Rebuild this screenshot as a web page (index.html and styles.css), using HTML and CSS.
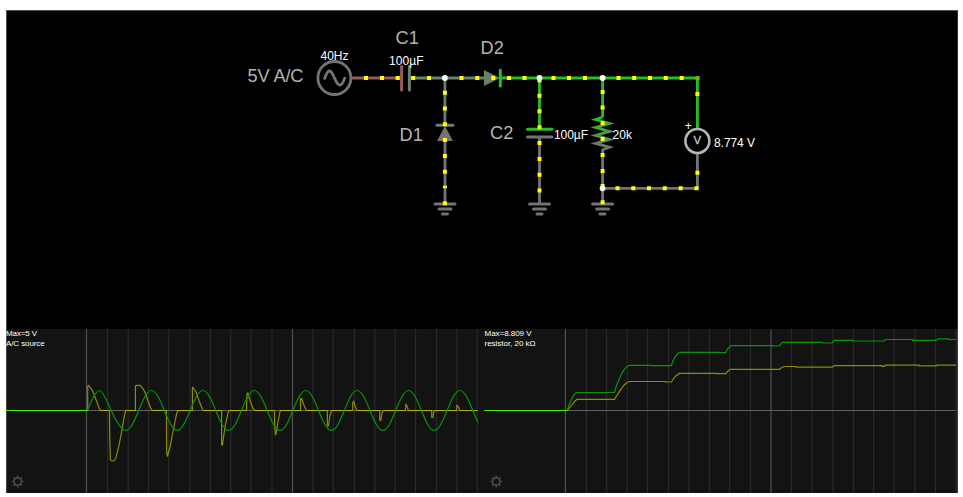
FILE: index.html
```html
<!DOCTYPE html>
<html lang="en">
<head>
    <meta charset="UTF-8">
    <meta name="viewport" content="width=device-width, initial-scale=1.0">
    <title>Circuit Simulator</title>
    <link rel="stylesheet" href="styles.css">
</head>
<body>
    <div class="simulator">
        <!-- Circuit -->
        <svg class="circuit" viewBox="6 10 952 319">
            <defs>
                <linearGradient id="drop" gradientUnits="userSpaceOnUse" x1="0" y1="117" x2="0" y2="150">
                    <stop offset="0" stop-color="#28bc28"/>
                    <stop offset="1" stop-color="#737373"/>
                </linearGradient>
            </defs>

            <!-- A/C source -->
            <circle class="neutral" cx="334.4" cy="78" r="16.5"/>
            <path class="neutral" d="M324.2 79.5C326 75 327 71 329.3 71C332 71 332.8 75 334.5 78C336 81 337 85 340 85C342.5 85 343.5 81 345.2 77"/>

            <!-- Wires -->
            <path class="neg" d="M351.5 78H401"/>
            <path class="low" d="M410 78H485M444.9 78V125"/>
            <path class="high" d="M500 78H697.4V129M539.5 78V129M602.6 78V117"/>
            <path class="neutral" d="M445 140V204M539.5 137V204M602.6 149V204M602.6 188.3H697.4V153"/>

            <!-- C1, D2, D1, C2 -->
            <path class="neg plate" d="M401.6 66.5V90"/>
            <path class="low plate" d="M409.4 66.5V90"/>
            <path class="low-fill" d="M484 70V86L500 78Z"/>
            <path class="high plate" d="M500.3 70V86"/>
            <path class="low plate" d="M437 125.3H453"/>
            <path class="neutral-fill" d="M445 126L437 141H453Z"/>
            <path class="high plate" d="M527.5 129.3H552"/>
            <path class="neutral plate" d="M527.5 137H552"/>

            <!-- Resistor and voltmeter -->
            <path class="resistor" d="M602.6 117L595.5 119.5L609.5 123.4L595.5 127.4L609.5 131.4L595.5 135.4L609.5 139.4L595.5 143.4L609.5 147.2L602.6 149.7"/>
            <circle class="meter" cx="697.4" cy="141" r="12"/>

            <!-- Grounds -->
            <path class="neutral ground" d="M435 204H455M439 209H451M442.5 214H447.5"/>
            <path class="neutral ground" d="M529.5 204H549.5M533.5 209H545.5M537 214H542"/>
            <path class="neutral ground" d="M592.6 204H612.6M596.6 209H608.6M600 214H605"/>

            <!-- Current dots -->
            <path class="dots" d="M364 78h4m12 0h4m11.7 0h4m11.5 0h4m11.8 0h4m28.5 0h4m11.8 0h4m12 0h4m11.7 0h4m11.5 0h4m25 0h4m11.5 0h4m12 0h4m29.5 0h4m11.7 0h4m11.8 0h4m11.8 0h4m11.9 0h4"/>
            <path class="dots" d="M442.9 92.7h4m-4 15.8h4m-4 15.7h4m-4 15.8h4m-4 16h4m-4 15.7h4m-4 31.6h4"/>
            <path class="dots half" d="M442.9 187h4"/>
            <path class="dots" d="M537.5 80.5h4m-4 15.2h4m-4 15.6h4m-4 15.9h4m-4 15.8h4m-4 16h4m-4 15.7h4m-4 15.8h4"/>
            <path class="dots" d="M600.6 92h4m-4 15.5h4m-4 15.8h4m-4 15.7h4m-4 16h4m-4 16h4m-4 15h4m-4 16.3h4"/>
            <path class="dots" d="M695.4 94h4m-4 78.7h4M615.5 188.3h4m11.8 0h4m11.7 0h4m11.8 0h4m11.9 0h4m11.8 0h4"/>
            <rect class="corner-dot" x="695.6" y="76" width="4" height="4"/>

            <!-- Junctions -->
            <g class="junctions">
                <circle cx="444.9" cy="78" r="2.9"/>
                <circle cx="539.5" cy="78" r="2.9"/>
                <circle cx="602.6" cy="78" r="2.9"/>
                <circle cx="602.6" cy="188.3" r="2.9"/>
            </g>

            <!-- Labels -->
            <g class="labels">
                <text x="247.5" y="81.5" textLength="56">5V A/C</text>
                <text x="395.5" y="44">C1</text>
                <text x="480.5" y="54">D2</text>
                <text x="399.5" y="140.5">D1</text>
                <text x="490" y="138.7">C2</text>
            </g>
            <g class="values">
                <text x="320.5" y="59.5" textLength="28">40Hz</text>
                <text x="389" y="64.5" textLength="34.5">100µF</text>
                <text x="554" y="139.3" textLength="34">100µF</text>
                <text x="612.5" y="139.3" textLength="19.5">20k</text>
                <text x="714" y="147" textLength="41">8.774 V</text>
                <text x="684.8" y="130">+</text>
                <text class="meter-text" x="697.4" y="144.3">V</text>
            </g>
        </svg>

        <!-- Scopes -->
        <div class="scopes">
            <svg class="scope" viewBox="6 329 472 164">
                <path class="grid" d="M107.5 329v164M128.2 329v164M148.5 329v164M168.7 329v164M189.8 329v164M210.4 329v164M230.7 329v164M250.9 329v164M272 329v164M313 329v164M333.3 329v164M354.4 329v164M374.8 329v164M395.2 329v164M415.6 329v164M436.5 329v164M456.8 329v164M477.3 329v164"/>
                <path class="grid major" d="M86.5 329v164M292.5 329v164"/>
                <path class="axis" d="M6 410.5H477.5"/>
                <path class="current" d="M87.7 410.5V386L88.7 385.3L89.7 387L91.7 389.3L94.3 395L97 402.3L99.3 408.7L100.7 410.5H109.5L109.7 438L110 446.7L110.4 460L112 461H114L115.7 458.3L118.7 446.7L121.7 431.7L124 417.7L125.7 410.5H135.4V386L136.3 385.3H140L143 388.5L145.5 393.5L148 401L150.5 407.5L152 410.5H166.4L166.7 453L167.5 456.5L168.3 453L170 447L173.3 430L176.7 413.3L177.7 410.5H192.4V388L193 387.5L196 392L199 400.5L201.5 407L203.3 410.5H221.6V444.5L222.4 445L225 427L228 413L229 410.5H246.5L247 394L247.8 393L250.5 402L253 408.5L254.7 410.5H274.5L274.7 428L275.5 434.5L276 434L278 421.5L280.3 410.5H300.5V398.5H301.7L303.7 404.5L306.3 410.5H327.4V426H328.5L330 415.5L331.7 410.5H352.7V403L353.7 401.5L355.3 407L357 410.5H379.7V420L380.7 420.5L382 413L383.3 410.5H405.3L406 404.5L407 406L408.3 410.5H431.7V417.5H433L433.7 412L435 410.5H456.7V405.5L458 406L460 410.5H477.3"/>
                <path class="rest" d="M100.7 410.5H109.5M125.7 410.5H135.4M152 410.5H166.4M177.7 410.5H192.4M203.3 410.5H221.6M229 410.5H246.5M254.7 410.5H274.5M280.3 410.5H300.5M306.3 410.5H327.4M331.7 410.5H352.7M357 410.5H379.7M383.3 410.5H405.3M408.3 410.5H431.7M435 410.5H456.7M460 410.5H477.3"/>
                <path class="voltage" d="M87.3 410.5c4.08 -10 8.17 -20 12.85 -20s16.34 40 25.7 40s16.34 -40 25.7 -40s16.34 40 25.7 40s16.34 -40 25.7 -40s16.34 40 25.7 40s16.34 -40 25.7 -40s16.34 40 25.7 40s16.34 -40 25.7 -40s16.34 40 25.7 40s16.34 -40 25.7 -40s16.34 40 25.7 40s16.34 -40 25.7 -40s16.34 40 25.7 40s16.34 -40 25.7 -40s16.34 40 25.7 40"/>
                <path class="idle" d="M6 410.5H87.7"/>
                <g class="info">
                    <text x="6" y="335.6" textLength="31">Max=5 V</text>
                    <text x="6" y="345.6" textLength="38.7">A/C source</text>
                </g>
                <g class="gear">
                    <circle cx="17.7" cy="481.5" r="3.6"/>
                    <path d="M17.7 475.5v2.4M17.7 485.1v2.4M11.7 481.5h2.4M21.3 481.5h2.4M13.5 477.3l1.7 1.7M20.2 484l1.7 1.7M13.5 485.7l1.7 -1.7M20.2 479l1.7 -1.7"/>
                </g>
            </svg>

            <svg class="scope" viewBox="484 329 473 164">
                <path class="grid" d="M586.4 329v164M606.6 329v164M627.2 329v164M647.5 329v164M668.5 329v164M688.8 329v164M709.4 329v164M729.6 329v164M750.5 329v164M791.4 329v164M812 329v164M833 329v164M853.4 329v164M873.6 329v164M894 329v164M915 329v164M935.5 329v164M956 329v164"/>
                <path class="grid major" d="M565.4 329v164M771 329v164"/>
                <path class="axis" d="M484 410.5H956"/>
                <path class="current" d="M567.3 410.5L571.7 405L575 401L577 399.4H614.5L618.3 393.3L623.3 386L626.7 382.7L629.3 381.5H665.5V382H671.5L673.3 379L675.7 376L679.3 373.4H716.5V373.7H725.8L728 371L730.5 369.3H779.5L781 368L784 366.5H796V367.2H832.3L834 365.7H882V366.3H884L885.5 365.2H919V365.9H936L937 365.2H956"/>
                <path class="voltage" d="M567 410.5L568.3 407.3L570.7 400.7L573.3 395.7L575.7 393L577.7 392.5H614.5L616.7 385L621.7 373.3L625 368.3L627.7 366L630 365.3H650L651 365.7H671.3L673.3 360L676.7 354.7L679.3 352.3H719V352.6H725.8L727.3 349.3L731 345.6H773V346H779L782.5 342.4H822V343H832L834 340.4H852.7V341H884L885.3 339.5H912.7V340.3H936.7L938 338.8H948.7V339.5H956"/>
                <path class="idle" d="M484.5 410.5H567.3"/>
                <g class="info">
                    <text x="484.5" y="335.6" textLength="47">Max=8.809 V</text>
                    <text x="484.5" y="345.6" textLength="51">resistor, 20 kΩ</text>
                </g>
                <g class="gear">
                    <circle cx="496.2" cy="481.5" r="3.6"/>
                    <path d="M496.2 475.5v2.4M496.2 485.1v2.4M490.2 481.5h2.4M499.8 481.5h2.4M492 477.3l1.7 1.7M498.7 484l1.7 1.7M492 485.7l1.7 -1.7M498.7 479l1.7 -1.7"/>
                </g>
            </svg>
        </div>
    </div>
</body>
</html>
```
FILE: styles.css
```css
body {
    margin: 0;
    padding: 10px 5px 4px 6px;
    background-color: #fff;
    font-family: "Liberation Sans", Arial, sans-serif;
}

.simulator {
    display: flex;
    flex-direction: column;
    width: 952px;
}

svg {
    display: block;
    fill: none;
}

.circuit {
    width: 952px;
    height: 319px;
    background-color: #000;
    box-shadow: inset 1px 1px #505454, inset -1px 0 #303030;
}

/* Wire colors by voltage */
.neutral, .neg, .low, .high {
    stroke: #737373;
    stroke-width: 2.8;
}

.neg {
    stroke: #965a5a;
}

.low {
    stroke: #6b806b;
}

.high {
    stroke: #28bc28;
}

.plate, .ground {
    stroke-width: 3;
    stroke-linecap: round;
}

.low-fill {
    fill: #6b806b;
}

.neutral-fill {
    fill: #737373;
}

.resistor {
    stroke: url(#drop);
    stroke-width: 2.8;
}

.meter {
    stroke: #b4b4b4;
    stroke-width: 2.6;
}

.dots {
    stroke: #ffff00;
    stroke-width: 4;
}

.half {
    stroke-width: 2.5;
}

.corner-dot {
    fill: #7cb000;
}

.junctions {
    fill: #fff;
}

.labels {
    fill: #b4b4b4;
    font-size: 18.2px;
}

.values {
    fill: #fff;
    font-size: 12px;
}

.meter-text {
    fill: #c8c8c8;
    stroke: #c8c8c8;
    stroke-width: 0.3;
    font-size: 11.5px;
    text-anchor: middle;
}

/* Scope traces */
.scopes {
    display: flex;
    gap: 6px;
    width: 951px;
    height: 164px;
    background-color: #131313;
    border-right: 1px solid #404040;
    box-shadow: inset 1px 0 #444;
}

.scope {
    flex: 0 0 472px;
    height: 164px;
}

.scope + .scope {
    flex-basis: 473px;
}

.grid {
    stroke: #292929;
    stroke-width: 1.2;
}

.major {
    stroke: #505050;
}

.axis {
    stroke: #606060;
}

.current {
    stroke: #8c8c05;
    stroke-width: 1.2;
}

.rest {
    stroke: #b8b010;
    stroke-width: 1.2;
}

.voltage {
    stroke: #05960a;
    stroke-width: 1.2;
}

.idle {
    stroke: #48f000;
    stroke-width: 1.2;
}

.info {
    fill: #fff;
    font-size: 8px;
}

.gear {
    stroke: #484848;
    stroke-width: 1.7;
}
```
